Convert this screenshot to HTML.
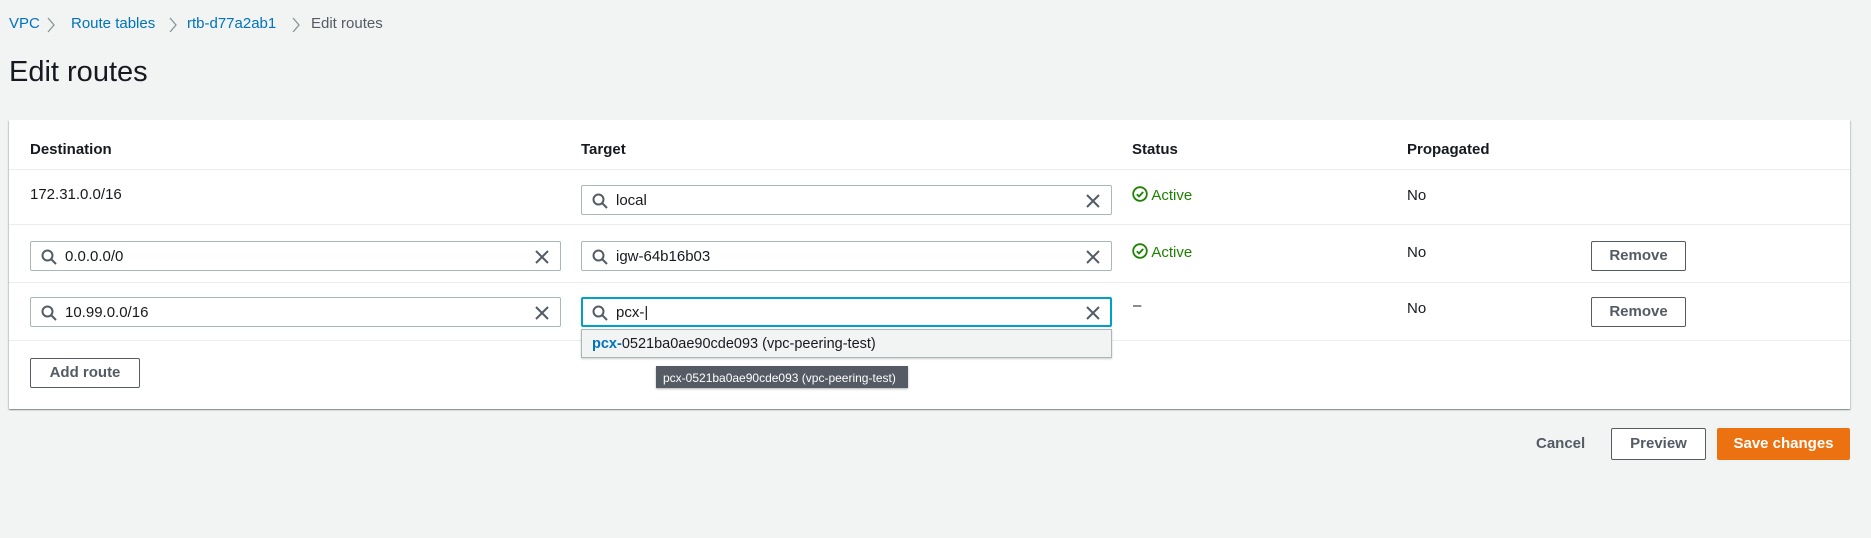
<!DOCTYPE html>
<html><head><meta charset="utf-8"><style>
*{box-sizing:border-box;margin:0;padding:0}
body{width:1871px;height:538px;background:#f2f3f3;font-family:"Liberation Sans",sans-serif;color:#16191f;position:relative;overflow:hidden;font-size:15px}
.a{position:absolute}
.bc{top:15px;font-size:15px;color:#0073bb}
.chev{position:absolute;top:16px}
.panel{left:9px;top:120px;width:1841px;height:289px;background:#fff;box-shadow:0 1px 1px 0 rgba(0,28,36,.3),1px 1px 1px 0 rgba(0,28,36,.15),-1px 1px 1px 0 rgba(0,28,36,.15)}
.hd{font-weight:bold;font-size:15px;top:141px}
.line{left:9px;width:1841px;height:1px;background:#eaeded}
.inp{height:30px;border:1px solid #aab7b8;border-radius:2px;background:#fff}
.inp .t{position:absolute;left:34px;top:6px;font-size:15px}
.inp svg.s{position:absolute;left:10px;top:7px}
.inp svg.x{position:absolute;right:10px;top:7px}
.btn{height:30px;border:1px solid #545b64;border-radius:2px;background:#fff;font-weight:bold;color:#545b64;text-align:center;line-height:28px;font-size:15px}
.act{color:#1d8102;font-size:15px}
</style></head><body>
<div class="a bc" style="left:9px">VPC</div>
<svg class="chev" style="left:46px" width="10" height="18" viewBox="0 0 10 18"><path d="M2 2l6 7-6 7" fill="none" stroke="#879596" stroke-width="1.3"/></svg>
<div class="a bc" style="left:71px">Route tables</div>
<svg class="chev" style="left:168px" width="10" height="18" viewBox="0 0 10 18"><path d="M2 2l6 7-6 7" fill="none" stroke="#879596" stroke-width="1.3"/></svg>
<div class="a bc" style="left:187px">rtb-d77a2ab1</div>
<svg class="chev" style="left:291px" width="10" height="18" viewBox="0 0 10 18"><path d="M2 2l6 7-6 7" fill="none" stroke="#879596" stroke-width="1.3"/></svg>
<div class="a bc" style="left:311px;color:#545b64">Edit routes</div>
<div class="a" style="left:9px;top:56px;font-size:29px">Edit routes</div>

<div class="a panel"></div>
<div class="a hd" style="left:30px">Destination</div>
<div class="a hd" style="left:581px">Target</div>
<div class="a hd" style="left:1132px">Status</div>
<div class="a hd" style="left:1407px">Propagated</div>
<div class="a line" style="top:169px"></div>
<div class="a line" style="top:224px"></div>
<div class="a line" style="top:282px"></div>
<div class="a line" style="top:340px"></div>

<div class="a" style="left:30px;top:186px">172.31.0.0/16</div>

<div class="a inp" style="left:581px;top:185px;width:531px"><svg class="s" width="16" height="16" viewBox="0 0 16 16"><circle cx="6.5" cy="6.5" r="5" fill="none" stroke="#545b64" stroke-width="2"/><path d="M10 10l5 5" stroke="#545b64" stroke-width="2"/></svg><span class="t">local</span><svg class="x" width="16" height="16" viewBox="0 0 16 16"><path d="M2 2l12 12M14 2L2 14" stroke="#545b64" stroke-width="2"/></svg></div>

<div class="a inp" style="left:30px;top:241px;width:531px"><svg class="s" width="16" height="16" viewBox="0 0 16 16"><circle cx="6.5" cy="6.5" r="5" fill="none" stroke="#545b64" stroke-width="2"/><path d="M10 10l5 5" stroke="#545b64" stroke-width="2"/></svg><span class="t">0.0.0.0/0</span><svg class="x" width="16" height="16" viewBox="0 0 16 16"><path d="M2 2l12 12M14 2L2 14" stroke="#545b64" stroke-width="2"/></svg></div>
<div class="a inp" style="left:581px;top:241px;width:531px"><svg class="s" width="16" height="16" viewBox="0 0 16 16"><circle cx="6.5" cy="6.5" r="5" fill="none" stroke="#545b64" stroke-width="2"/><path d="M10 10l5 5" stroke="#545b64" stroke-width="2"/></svg><span class="t">igw-64b16b03</span><svg class="x" width="16" height="16" viewBox="0 0 16 16"><path d="M2 2l12 12M14 2L2 14" stroke="#545b64" stroke-width="2"/></svg></div>

<div class="a inp" style="left:30px;top:297px;width:531px"><svg class="s" width="16" height="16" viewBox="0 0 16 16"><circle cx="6.5" cy="6.5" r="5" fill="none" stroke="#545b64" stroke-width="2"/><path d="M10 10l5 5" stroke="#545b64" stroke-width="2"/></svg><span class="t">10.99.0.0/16</span><svg class="x" width="16" height="16" viewBox="0 0 16 16"><path d="M2 2l12 12M14 2L2 14" stroke="#545b64" stroke-width="2"/></svg></div>
<div class="a inp" style="left:581px;top:297px;width:531px;border:2px solid #00a1c9"><svg class="s" width="16" height="16" viewBox="0 0 16 16" style="left:9px;top:6px"><circle cx="6.5" cy="6.5" r="5" fill="none" stroke="#545b64" stroke-width="2"/><path d="M10 10l5 5" stroke="#545b64" stroke-width="2"/></svg><span class="t" style="left:33px;top:5px">pcx-|</span><svg class="x" width="16" height="16" viewBox="0 0 16 16" style="right:9px;top:6px"><path d="M2 2l12 12M14 2L2 14" stroke="#545b64" stroke-width="2"/></svg></div>

<div class="a" style="left:581px;top:329px;width:531px;height:29px;background:#f2f3f3;border:1px solid #aab7b8;box-shadow:0 1px 2px rgba(0,0,0,.2);padding:6px 0 0 10px;font-size:14.5px"><b style="color:#0073bb">pcx-</b>0521ba0ae90cde093 (vpc-peering-test)</div>
<div class="a" style="left:656px;top:366px;width:252px;height:22px;background:#545b64;color:#fff;font-size:12px;padding:5px 0 0 7px;box-shadow:0 1px 2px rgba(0,0,0,.3)">pcx-0521ba0ae90cde093 (vpc-peering-test)</div>

<div class="a act" style="left:1132px;top:186px"><svg width="16" height="16" viewBox="0 0 16 16" style="vertical-align:-2px"><circle cx="8" cy="8" r="6.8" fill="none" stroke="#1d8102" stroke-width="1.8"/><path d="M4.8 8.2l2.2 2.2 4.2-4.4" fill="none" stroke="#1d8102" stroke-width="1.8"/></svg> Active</div>
<div class="a act" style="left:1132px;top:243px"><svg width="16" height="16" viewBox="0 0 16 16" style="vertical-align:-2px"><circle cx="8" cy="8" r="6.8" fill="none" stroke="#1d8102" stroke-width="1.8"/><path d="M4.8 8.2l2.2 2.2 4.2-4.4" fill="none" stroke="#1d8102" stroke-width="1.8"/></svg> Active</div>
<div class="a" style="left:1133px;top:297px">–</div>

<div class="a" style="left:1407px;top:187px">No</div>
<div class="a" style="left:1407px;top:244px">No</div>
<div class="a" style="left:1407px;top:300px">No</div>

<div class="a btn" style="left:1591px;top:241px;width:95px">Remove</div>
<div class="a btn" style="left:1591px;top:297px;width:95px">Remove</div>
<div class="a btn" style="left:30px;top:358px;width:110px">Add route</div>

<div class="a" style="left:1536px;top:435px;font-weight:bold;color:#545b64">Cancel</div>
<div class="a btn" style="left:1611px;top:428px;width:95px;height:32px;line-height:30px">Preview</div>
<div class="a btn" style="left:1717px;top:428px;width:133px;height:32px;line-height:30px;background:#ec7211;border-color:#ec7211;color:#fff">Save changes</div>
</body></html>
